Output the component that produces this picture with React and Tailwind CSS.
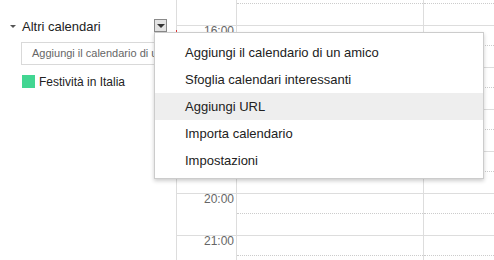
import React from "react";

const hours = ["15:00", "16:00", "17:00", "18:00", "19:00", "20:00", "21:00"];

const menuItems = [
  "Aggiungi il calendario di un amico",
  "Sfoglia calendari interessanti",
  "Aggiungi URL",
  "Importa calendario",
  "Impostazioni",
];

export default function App() {
  return (
    <div className="relative flex h-[260px] w-[494px] overflow-hidden bg-white font-['Liberation_Sans',Arial,sans-serif] text-[#222]">
      {/* Sidebar */}
      <aside className="w-[176px] shrink-0">
        <div className="mt-[19px] flex h-[13px] items-start">
          <span className="ml-[10px] mt-[6px] h-0 w-0 border-x-[3px] border-t-[3px] border-x-transparent border-t-[#555]" />
          <span className="ml-[6px] text-[13px] leading-[15px]">Altri calendari</span>
          <button className="ml-auto mr-[9px] flex h-[13px] w-[13px] items-center justify-center border border-[#8a8a8a] bg-[#e3e3e3]">
            <span className="mt-[1px] h-0 w-0 border-x-[4px] border-t-[4px] border-x-transparent border-t-[#333]" />
          </button>
        </div>

        <div className="ml-[21px] mt-[10px] flex h-[23px] w-[150px] items-center overflow-hidden whitespace-nowrap border border-[#d9d9d9] pl-[10px] text-[11px] text-[#666]">
          Aggiungi il calendario di un amico
        </div>

        <div className="ml-[22px] mt-[10px] flex h-[13px] items-center gap-[4px]">
          <span className="h-[13px] w-[13px] bg-[#42d692]" />
          <span className="text-[12px]">Festività in Italia</span>
        </div>
      </aside>

      {/* Day grid */}
      <div className="flex-1 overflow-hidden border-l border-[#ddd]">
        <div className="-mt-[17px]">
          {hours.map((h) => (
            <div key={h} className="flex h-[42px] border-t border-[#ddd]">
              <div className="w-[60px] shrink-0 border-r border-[#ddd] pr-[2px] text-right text-[12px] leading-[11px] text-[#666]">
                {h}
              </div>
              <div className="w-[187px] shrink-0 border-r border-[#ddd]">
                <div className="h-[20px] border-b border-dotted border-[#ccc]" />
              </div>
              <div className="flex-1">
                <div className="h-[20px] border-b border-dotted border-[#ccc]" />
              </div>
            </div>
          ))}
        </div>
      </div>

      <span className="absolute left-[176px] top-[30px] h-[2px] w-[1px] bg-[#d33]" />

      {/* Dropdown menu */}
      <div className="absolute left-[154px] top-[32px] w-[330px] border border-[#ccc] bg-white pb-[4px] pt-[6px] shadow-[0_2px_4px_rgba(0,0,0,0.2)]">
        {menuItems.map((item) => (
          <div
            key={item}
            className={
              item === "Aggiungi URL"
                ? "h-[27px] bg-[#eee] pl-[30px] text-[13px] leading-[27px]"
                : "h-[27px] pl-[30px] text-[13px] leading-[27px]"
            }
          >
            {item}
          </div>
        ))}
      </div>
    </div>
  );
}
